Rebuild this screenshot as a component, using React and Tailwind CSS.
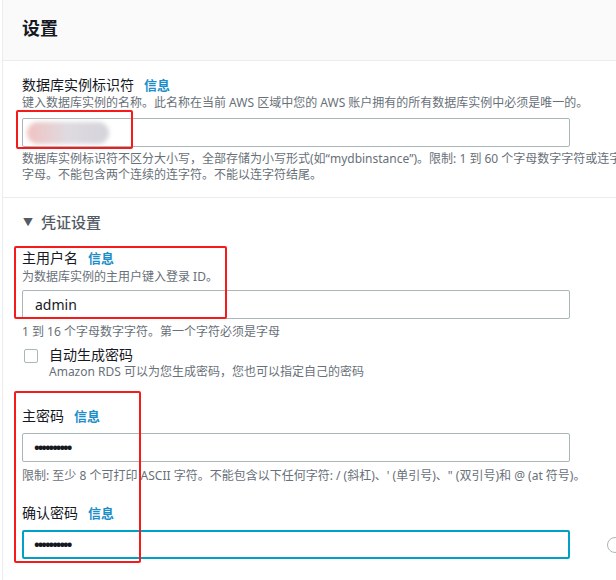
export default function App() {
  const font = { fontFamily: '"Noto Sans", "Noto Sans CJK SC", sans-serif' };
  const Info = () => (
    <span className="ml-[10px] text-[13px] font-bold text-[#1b8ec9]">信息</span>
  );
  const Dots = () => (
    <span className="text-[15px] tracking-[-2px] font-bold text-[#16191f]">••••••••••</span>
  );

  return (
    <div className="relative w-[616px] h-[580px] overflow-hidden bg-white" style={font}>
      <div className="ml-[2px] h-full border-l border-[#eaeded]">
        {/* Header */}
        <div className="h-[61px] bg-[#fafafa] border-b border-[#eaeded] pl-[19px] flex items-center">
          <h2 className="text-[18px] font-bold text-[#16191f] -mt-[4px]">设置</h2>
        </div>

        {/* Identifier */}
        <div className="pl-[19px] pt-[14px] pb-[14px] border-b border-[#eaeded]">
          <div className="h-[20px] leading-[20px] text-[14px] text-[#16191f] flex items-center">
            数据库实例标识符<Info />
          </div>
          <div className="h-[16px] leading-[16px] text-[12px] text-[#687078] whitespace-nowrap">
            键入数据库实例的名称。此名称在当前 AWS 区域中您的 AWS 账户拥有的所有数据库实例中必须是唯一的。
          </div>
          <div className="mt-[7px] w-[548px] h-[29px] border border-[#aab7b8] rounded-[2px] flex items-center pl-[4px]">
            <div className="w-[82px] h-[22px] rounded-full blur-[2px] bg-gradient-to-r from-[#f0c2c2] via-[#dedbe0] to-[#d4d4da]" />
          </div>
          <div className="mt-[4px] text-[12px] leading-[16px] text-[#687078] whitespace-nowrap">
            <div>数据库实例标识符不区分大小写，全部存储为小写形式(如“mydbinstance”)。限制: 1 到 60 个字母数字字符或连字符。第一个字符必须是</div>
            <div>字母。不能包含两个连续的连字符。不能以连字符结尾。</div>
          </div>
        </div>

        {/* Credentials */}
        <div className="pl-[19px] pt-[13px]">
          <div className="h-[22px] flex items-center gap-[8px] text-[15px] text-[#545b64]">
            <span className="text-[10px] pl-[1px]">▼</span>
            <span className="font-medium">凭证设置</span>
          </div>

          <div className="mt-[15px] h-[20px] leading-[20px] text-[14px] text-[#16191f] flex items-center">
            主用户名<Info />
          </div>
          <div className="mt-[1px] h-[16px] leading-[16px] text-[12px] text-[#687078]">
            为数据库实例的主用户键入登录 ID。
          </div>
          <div className="mt-[5px] w-[548px] h-[29px] border border-[#aab7b8] rounded-[2px] flex items-center pl-[12px] text-[14px] text-[#16191f]">
            admin
          </div>
          <div className="mt-[5px] h-[16px] leading-[16px] text-[12px] text-[#687078]">
            1 到 16 个字母数字字符。第一个字符必须是字母
          </div>

          <div className="mt-[5px] flex">
            <div className="ml-[2px] mt-[4px] w-[14px] h-[14px] border border-[#aab7b8] rounded-[2px] bg-white" />
            <div className="ml-[11px]">
              <div className="h-[19px] leading-[19px] text-[14px] text-[#16191f]">自动生成密码</div>
              <div className="h-[16px] leading-[16px] text-[12px] text-[#687078]">
                Amazon RDS 可以为您生成密码，您也可以指定自己的密码
              </div>
            </div>
          </div>

          <div className="mt-[26px] h-[20px] leading-[20px] text-[14px] text-[#16191f] flex items-center">
            主密码<Info />
          </div>
          <div className="mt-[7px] w-[548px] h-[29px] border border-[#aab7b8] rounded-[2px] flex items-center pl-[11px]">
            <Dots />
          </div>
          <div className="mt-[6px] h-[16px] leading-[16px] text-[12px] text-[#687078] whitespace-nowrap">
            限制: 至少 8 个可打印 ASCII 字符。不能包含以下任何字符: / (斜杠)、' (单引号)、" (双引号)和 @ (at 符号)。
          </div>

          <div className="mt-[19px] h-[20px] leading-[20px] text-[14px] text-[#16191f] flex items-center">
            确认密码<Info />
          </div>
          <div className="mt-[7px] w-[548px] h-[29px] border-2 border-[#00a1c9] rounded-[2px] flex items-center pl-[10px]">
            <Dots />
          </div>
        </div>
      </div>

      {/* Right-edge icon, cut off */}
      <div className="absolute left-[607px] top-[537px] w-[16px] h-[16px] rounded-full border-[1.5px] border-[#aab7b8]" />

      {/* Red annotation boxes */}
      <div className="absolute left-[16px] top-[110px] w-[117px] h-[39px] border-2 border-[#f51b1b] rounded-[2px]" />
      <div className="absolute left-[14px] top-[246px] w-[213px] h-[73px] border-2 border-[#f51b1b] rounded-[2px]" />
      <div className="absolute left-[14px] top-[391px] w-[127px] h-[172px] border-2 border-[#f51b1b] rounded-[2px]" />
    </div>
  );
}
